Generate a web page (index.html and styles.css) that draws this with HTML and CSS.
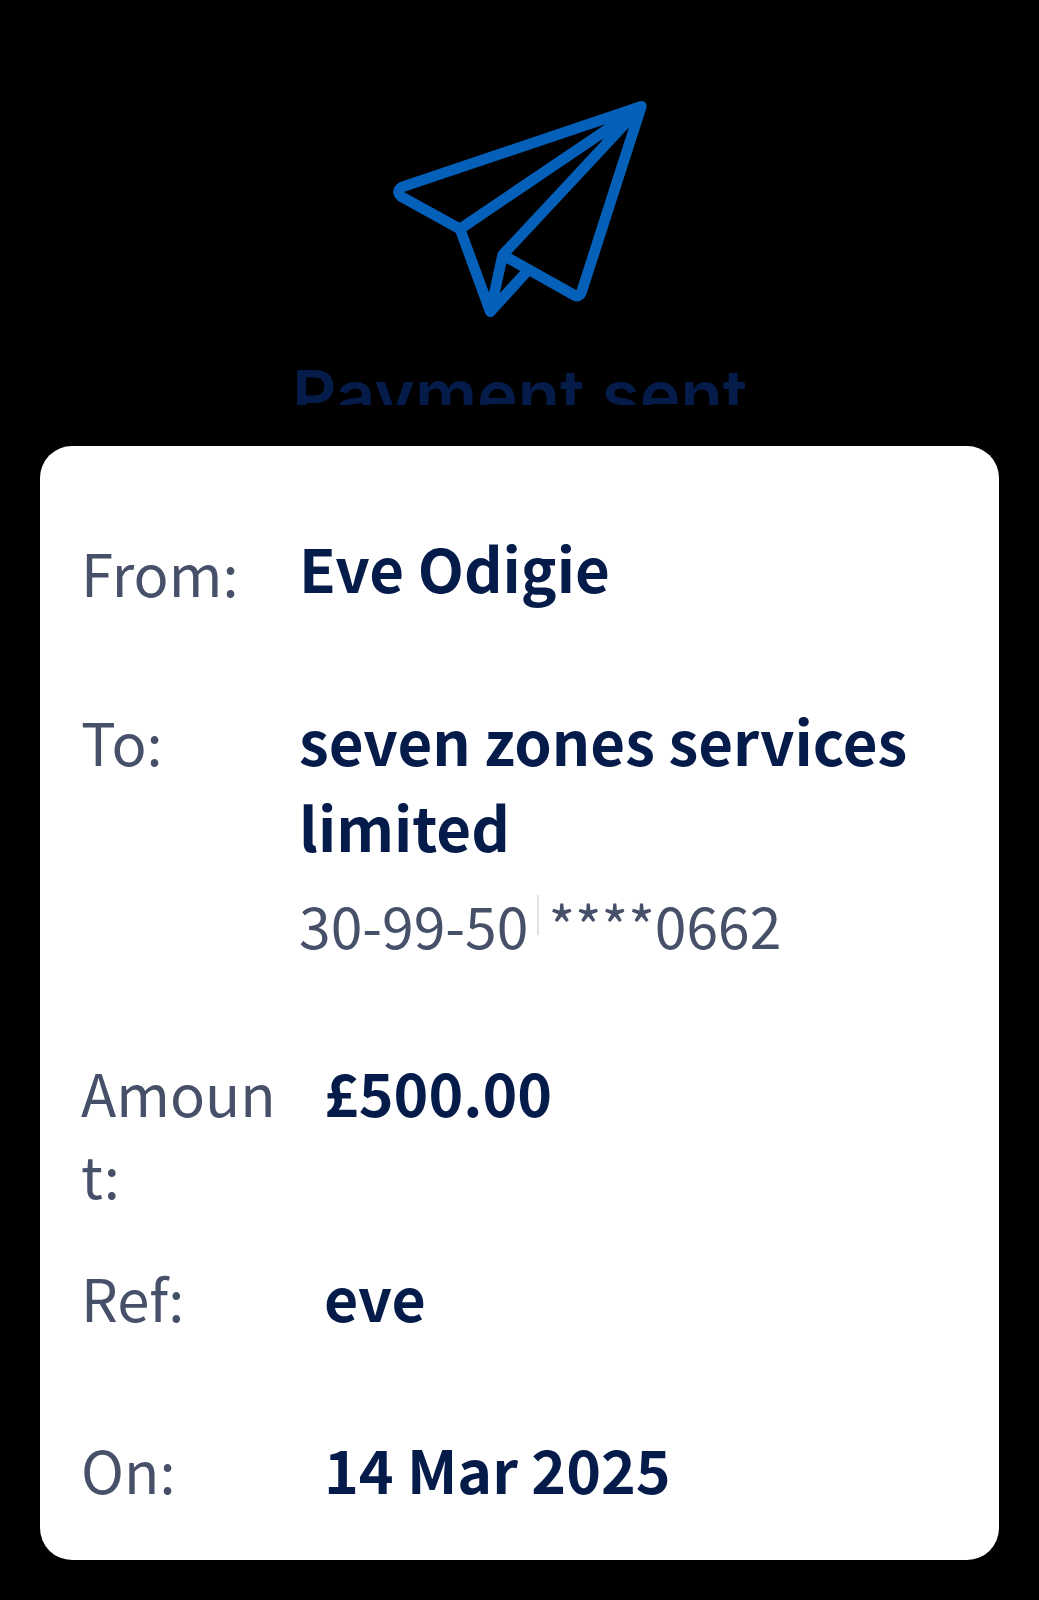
FILE: index.html
```html
<!DOCTYPE html>
<html lang="en">
<head>
<meta charset="utf-8">
<meta name="viewport" content="width=device-width, initial-scale=1">
<title>Payment sent</title>
<link rel="stylesheet" href="styles.css">
</head>
<body>
<main class="page">
  <header class="hero">
    <svg class="plane" viewBox="0 0 840 720" aria-hidden="true">
      <path d="M784 49L66 291Q46 304 64 320L240 417L331 665L440 545M784 49L240 417M784 49L368 495L331 665M368 495L582 615Q596 624 604 608L784 49"/>
      <path class="plane-tip" d="M784 49L680 99L665 150L748 112Z"/>
    </svg>
    <h1 class="title">Payment sent</h1>
  </header>
  <section class="card">
    <dl class="parties">
      <div class="row row-center">
        <dt>From:</dt>
        <dd>Eve Odigie</dd>
      </div>
      <div class="row">
        <dt>To:</dt>
        <dd>seven zones services limited
          <div class="account"><span>30-99-50</span><span class="divider"></span><span>****0662</span></div>
        </dd>
      </div>
    </dl>
    <dl class="details">
      <div class="row">
        <dt>Amount:</dt>
        <dd>£500.00</dd>
      </div>
      <div class="row row-ref">
        <dt>Ref:</dt>
        <dd>eve</dd>
      </div>
      <div class="row row-date">
        <dt>On:</dt>
        <dd>14 Mar 2025</dd>
      </div>
    </dl>
  </section>
</main>
</body>
</html>
```
FILE: styles.css
```css
* {
  box-sizing: border-box;
}

body {
  margin: 0;
  background: #000;
  color: #051b49;
  font-family: "Noto Sans CJK SC", "Noto Sans", sans-serif;
}

.page {
  padding: 90px 40px 40px;
}

.hero {
  display: flex;
  flex-direction: column;
  align-items: center;
}

.plane {
  width: 280px;
  height: 240px;
  fill: none;
  stroke: #0560ba;
  stroke-width: 32;
  stroke-linecap: round;
  stroke-linejoin: round;
}

.plane-tip {
  fill: #0560ba;
  stroke: none;
}

.title {
  height: 60px;
  margin: 15px 0 41px;
  overflow: hidden;
  font-family: Inter, sans-serif;
  font-size: 69px;
  font-weight: 600;
  line-height: 100px;
}

.card {
  padding: 78px 40px 48px 41px;
  border-radius: 32px;
  background: #fff;
}

.parties,
.details {
  display: flex;
  flex-direction: column;
  margin: 0;
}

.parties {
  gap: 77px;
}

.details {
  margin-top: 84px;
}

.row {
  display: grid;
  grid-template-columns: 178px 1fr;
  column-gap: 40px;
  align-items: baseline;
}

.details .row {
  grid-template-columns: 203px 1fr;
}

.row-center {
  align-items: center;
}

.row-center dd {
  padding-bottom: 10px;
}

.row-ref {
  margin-top: 39px;
}

.row-date {
  margin-top: 86px;
}

dt,
.account {
  color: #465069;
  font-size: 58px;
  font-weight: 400;
  line-height: 82px;
}

dt {
  overflow-wrap: anywhere;
}

dd {
  margin: 0;
  font-size: 60px;
  font-weight: 700;
  line-height: 86px;
}

.details dd {
  font-size: 59px;
}

.account {
  display: flex;
  margin-top: 14px;
  font-size: 57px;
}

.divider {
  width: 2px;
  height: 40px;
  margin: 12px 9px 0;
  background: #dfe2e8;
}
```
